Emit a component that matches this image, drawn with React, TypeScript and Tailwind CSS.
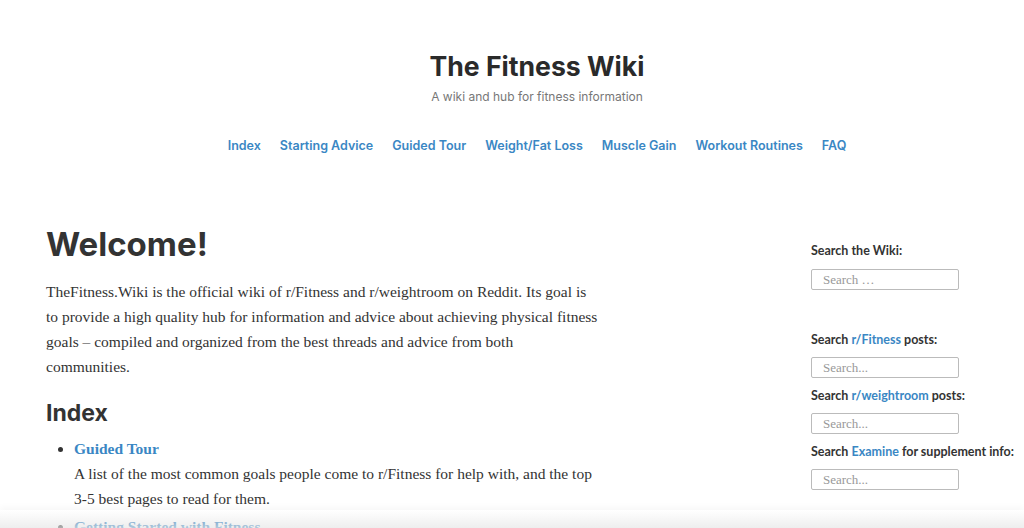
import React from "react";

const serif = { fontFamily: '"Liberation Serif", Georgia, serif' };

export default function App() {
  const nav = ["Index", "Starting Advice", "Guided Tour", "Weight/Fat Loss", "Muscle Gain", "Workout Routines", "FAQ"];
  const inputCls =
    "block h-[21px] w-[148px] rounded-[2px] border border-[#bbb] px-[11px] text-[13px] font-normal text-[#333] placeholder:text-[#999] outline-none";
  return (
    <div className="relative h-[528px] overflow-hidden bg-white text-[#333]" style={{ fontFamily: 'Inter, "Liberation Sans", sans-serif' }}>
      <header className="flex flex-col items-center pl-[50px] pt-[49px]">
        <h1 className="text-[26.6px] font-bold leading-[34px] text-[#2a2a2a]">The Fitness Wiki</h1>
        <p className="mt-[5px] text-[12px] leading-[18px] text-[#777]">A wiki and hub for fitness information</p>
        <nav className="mt-[31px] flex gap-[19px] text-[12.5px] font-semibold leading-[18px] text-[#3a87c4]">
          {nav.map((n) => (
            <a key={n}>{n}</a>
          ))}
        </nav>
      </header>
      <div className="flex pl-[46px] pt-[65px]">
        <main className="w-[553px] shrink-0">
          <h2 className="mt-[4px] text-[33px] font-bold leading-[40px] text-[#333]">Welcome!</h2>
          <p className="mt-[15px] text-[15.5px] leading-[25px] text-[#333]" style={serif}>
            TheFitness.Wiki is the official wiki of r/Fitness and r/weightroom on Reddit. Its goal is to provide a high quality hub for information and advice about achieving physical fitness goals – compiled and organized from the best threads and advice from both communities.
          </p>
          <h3 className="mt-[18px] text-[23px] font-bold leading-[32px] text-[#333]">Index</h3>
          <ul className="mt-[7px] list-disc pl-[28px]" style={serif}>
            <li>
              <a className="text-[15.5px] font-bold leading-[25px] text-[#3a87c4]">Guided Tour</a>
              <p className="text-[15.5px] leading-[25px]">A list of the most common goals people come to r/Fitness for help with, and the top 3-5 best pages to read for them.</p>
            </li>
            <li className="mt-[3px]">
              <a className="text-[15.5px] font-bold leading-[25px] text-[#3a87c4]">Getting Started with Fitness</a>
            </li>
          </ul>
        </main>
        <aside
          className="ml-[212px] w-[213px] whitespace-nowrap pt-[23px] text-[12.5px] font-bold leading-[16px] text-[#333]"
          style={{ fontFamily: 'Lato, "Liberation Sans", sans-serif' }}
        >
          <div>Search the Wiki:</div>
          <input className={`mt-[10px] ${inputCls}`} placeholder="Search …" style={serif} />
          <div className="mt-[42px]">Search <span className="text-[#3a87c4]">r/Fitness</span> posts:</div>
          <input className={`mt-[9px] ${inputCls}`} placeholder="Search..." style={serif} />
          <div className="mt-[10px]">Search <span className="text-[#3a87c4]">r/weightroom</span> posts:</div>
          <input className={`mt-[9px] ${inputCls}`} placeholder="Search..." style={serif} />
          <div className="mt-[10px]">Search <span className="text-[#3a87c4]">Examine</span> for supplement info:</div>
          <input className={`mt-[9px] ${inputCls}`} placeholder="Search..." style={serif} />
        </aside>
      </div>
      <div className="pointer-events-none absolute bottom-0 left-0 right-0 h-[18px] bg-gradient-to-b from-[#ffffff00] to-[#e6e6e6b0] shadow-[0_-3px_6px_rgba(0,0,0,0.03)]" />
    </div>
  );
}
